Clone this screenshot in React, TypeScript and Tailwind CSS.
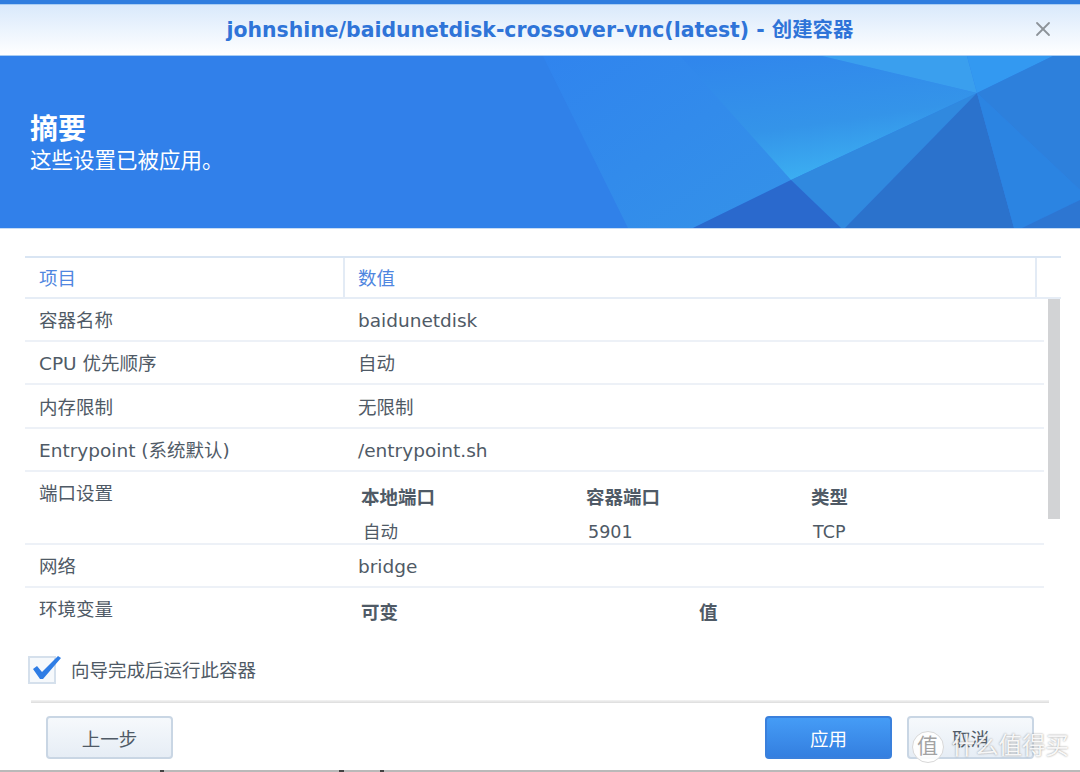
import { X } from 'lucide-react'

const FONT = "font-['DejaVu_Sans','Noto_Sans_CJK_SC',sans-serif]"

const ROWS = [
  { label: '容器名称', value: 'baidunetdisk' },
  { label: 'CPU 优先顺序', value: '自动' },
  { label: '内存限制', value: '无限制' },
  { label: 'Entrypoint (系统默认)', value: '/entrypoint.sh' },
]

function Row({ label, value }: { label: string; value: string }) {
  return (
    <div className="flex h-[43.2px] items-center border-b-2 border-[#edf1f7] pt-[3px] text-[#4f5a66]">
      <div className="w-[320px] pl-3.5">{label}</div>
      <div className="pl-[13px]">{value}</div>
    </div>
  )
}

// polygons of the header wallpaper
function Banner() {
  return (
    <svg className="h-full w-full" viewBox="0 0 1080 172" preserveAspectRatio="none">
      <defs>
        <linearGradient id="mid" x1="0" y1="0" x2="1" y2="1">
          <stop offset="0" stopColor="#3084ee" />
          <stop offset="1" stopColor="#3492e8" />
        </linearGradient>
        <linearGradient id="glow" x1="0.1" y1="0" x2="0.45" y2="1">
          <stop offset="0" stopColor="#3086ec" />
          <stop offset="0.6" stopColor="#3494e9" />
          <stop offset="1" stopColor="#3cb0f2" />
        </linearGradient>
      </defs>
      <rect width="1080" height="172" fill="#3180ea" />
      <polygon points="543,0 628,172 440,172 440,0" fill="#3081e9" />
      <polygon points="543,0 685,0 791,124 693,172 628,172" fill="url(#mid)" />
      <polygon points="680,0 822,0 977,37 791,124" fill="url(#glow)" />
      <polygon points="822,0 967,0 977,37" fill="#3a9fee" />
      <polygon points="967,0 1053,0 977,37" fill="#3399f1" />
      <polygon points="1053,0 1080,0 1080,134 977,37" fill="#2d80dc" />
      <polygon points="791,124 977,37 845,172 841,172" fill="#3089df" />
      <polygon points="791,124 841,172 693,172" fill="#2a69cd" />
      <polygon points="977,37 1014,172 845,172" fill="#2b72cc" />
      <polygon points="977,37 1080,134 1080,144 1022,172 1014,172" fill="#2b84e2" />
      <polygon points="1080,144 1022,172 1080,172" fill="#2d76d2" />
    </svg>
  )
}

export default function App() {
  return (
    <div className={`relative flex h-[772px] w-[1080px] flex-col overflow-hidden bg-white ${FONT}`}>
      <div className="h-[4px] shrink-0 bg-[#2f7ddf]" />
      <div className="flex h-[52px] shrink-0 items-center justify-center border-y border-[#a9cdf3] bg-gradient-to-b from-[#d9e9fb] to-white text-[20.4px] font-bold text-[#2f74d8]">
        johnshine/baidunetdisk-crossover-vnc(latest) - 创建容器
        <X className="absolute top-[15px] right-[25px] h-[28px] w-[24px] text-[#8d9399]" strokeWidth={1.8} />
      </div>
      <div className="relative h-[172px] shrink-0">
        <Banner />
        <div className="absolute top-[57px] left-[30px] text-white">
          <div className="text-[28px] leading-[34px] font-bold">摘要</div>
          <div className="text-[21.5px] leading-[28px]">这些设置已被应用。</div>
        </div>
      </div>
      <div className="h-px shrink-0 bg-[#c6dcf5]" />

      <div className="mt-[27px] ml-[25px] w-[1036px] shrink-0 text-[18.5px]">
        <div className="flex h-[43px] items-center border-y-2 border-t-[#d9e5f3] border-b-[#e6edf6] text-[#4f86e0]">
          <div className="flex h-full w-[320px] items-center border-r-2 border-[#e3ebf5] pt-0.5 pl-3.5">项目</div>
          <div className="flex h-full flex-1 items-center border-r-2 border-[#e3ebf5] pt-0.5 pl-[13px]">数值</div>
          <div className="w-[24px]" />
        </div>
        <div className="flex">
          <div className="w-[1019px] overflow-hidden">
            {ROWS.map((r) => (
              <Row key={r.label} {...r} />
            ))}
            <div className="flex h-[73px] border-b-2 border-[#edf1f7] text-[#4f5a66]">
              <div className="w-[320px] pt-2 pl-3.5">端口设置</div>
              <div className="grid flex-1 grid-cols-[225px_225px_1fr] content-start pt-3 pl-4">
                <span className="text-[18.5px] font-bold">本地端口</span>
                <span className="text-[18.5px] font-bold">容器端口</span>
                <span className="text-[18.5px] font-bold">类型</span>
                <span className="mt-[7px] pl-0.5 text-[17.5px]">自动</span>
                <span className="mt-[7px] pl-0.5 text-[17.5px]">5901</span>
                <span className="mt-[7px] pl-0.5 text-[17.5px]">TCP</span>
              </div>
            </div>
            <Row label="网络" value="bridge" />
            <div className="flex h-[44px] text-[#4f5a66]">
              <div className="w-[320px] pt-2 pl-3.5">环境变量</div>
              <div className="grid flex-1 grid-cols-[338px_1fr] pt-[11px] pl-4 text-[18.5px] font-bold">
                <span>可变</span>
                <span>值</span>
              </div>
            </div>
          </div>
          <div className="ml-[4px] h-[220px] w-[12px] bg-[#d2d3d5]" />
        </div>
      </div>

      <div className="mt-[24px] ml-[28px] flex h-[28px] shrink-0 items-center gap-[15px] text-[18.5px] text-[#4f5a66]">
        <div className="relative h-[28px] w-[28px] border-2 border-[#d5e0ec] bg-[#f6f9fc]">
          <svg className="absolute -top-[2px] left-[2px] h-[24px] w-[30px]" viewBox="0 0 30 24">
            <polygon points="1,13 5,10 10,16 26,0 29,2 11,23 8,23" fill="#2f7de5" />
          </svg>
        </div>
        <span className="pt-0.5">向导完成后运行此容器</span>
      </div>

      <div className="mt-[16px] mr-[31px] ml-[31px] h-[3px] shrink-0 bg-gradient-to-b from-[#f4f4f4] to-[#dcdcdc]" />

      <div className="mt-[13px] flex shrink-0 items-center px-[46px] text-[18.5px]">
        <button className="h-[43px] w-[127px] rounded border-2 border-[#c9d6e4] bg-gradient-to-b from-[#f6f9fc] to-[#e6edf5] pt-1 text-[#4f5a66]">上一步</button>
        <button className="ml-auto h-[43px] w-[127px] rounded border-2 border-[#3a80dc] bg-gradient-to-b from-[#459cf6] to-[#347fe0] pt-1 text-white">应用</button>
        <button className="ml-[15px] h-[43px] w-[127px] rounded border-2 border-[#c9d6e4] bg-gradient-to-b from-[#f6f9fc] to-[#e6edf5] pt-1 text-[#4f5a66]">取消</button>
      </div>

      <div className="absolute bottom-0 left-0 h-[2px] w-full bg-[#b9b9b9]" />
      {/* tops of the page text cut off under the window */}
      <div className="absolute bottom-0 left-[160px] h-[2px] w-[4px] bg-[#444]" />
      <div className="absolute bottom-0 left-[339px] h-[2px] w-[5px] bg-[#444]" />
      <div className="absolute bottom-0 left-[380px] h-[2px] w-[4px] bg-[#444]" />

      {/* watermark over the footer */}
      <div className="absolute right-[11px] bottom-[9px] flex items-center gap-[8px]">
        <span className="flex h-[32px] w-[32px] items-center justify-center rounded-full border border-[#d8d8d8] bg-white/90 text-[21px] text-[#a3a3a3]">值</span>
        <span className="text-[23.5px] leading-none text-white/90 [text-shadow:0_0_2px_#8a8a8a]">什么值得买</span>
      </div>
    </div>
  )
}
